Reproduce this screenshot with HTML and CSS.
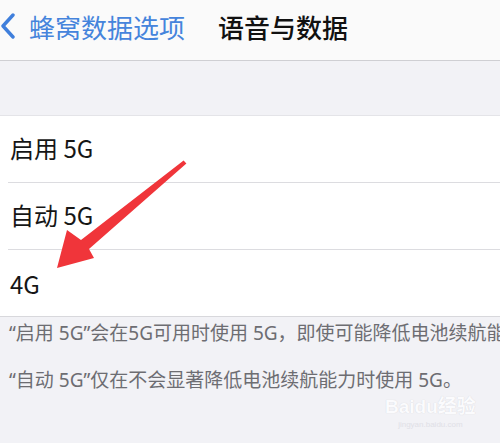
FILE: index.html
```html
<!DOCTYPE html>
<html lang="zh">
<head>
<meta charset="utf-8">
<link rel="stylesheet" href="styles.css">
</head>
<body>
<div class="screen">
  <header class="nav">
    <div class="back">
      <svg class="chev" width="16" height="26" viewBox="0 0 16 26"><path d="M13 2 L3 13 L13 24" fill="none" stroke="#3f7fdc" stroke-width="3.4" stroke-linecap="round" stroke-linejoin="round"/></svg>
      <span class="back-label">蜂窝数据选项</span>
    </div>
    <div class="title">语音与数据</div>
  </header>
  <div class="gap"></div>
  <ul class="list">
    <li class="row">启用 5G</li>
    <li class="row">自动 5G</li>
    <li class="row">4G</li>
  </ul>
  <div class="footer">
    <p class="note">“启用 5G”会在5G可用时使用 5G，即使可能降低电池续航能力。</p>
    <p class="note">“自动 5G”仅在不会显著降低电池续航能力时使用 5G。</p>
  </div>
  <svg class="arrow" width="500" height="443" viewBox="0 0 500 443">
    <polygon points="183.6,160.6 186.4,163.4 89,249 94,258 57,268 67,230 81,240" fill="#f0353a"/>
  </svg>
  <div class="watermark"><span class="wm-main">Baidu经验</span><span class="wm-sub">jingyan.baidu.com</span></div>
</div>
</body>
</html>
```

FILE: styles.css
```css
* { box-sizing: border-box; margin: 0; padding: 0; }
html, body { width: 500px; height: 443px; overflow: hidden; }
body {
  font-family: "Noto Sans CJK SC", "Noto Sans", sans-serif;
  background: #f2f2f6;
  position: relative;
}
.screen { position: relative; width: 500px; height: 443px; overflow: hidden; }
.nav {
  height: 61px;
  background: #fafafa;
  border-bottom: 1px solid #cfcfd3;
  display: flex;
  align-items: center;
  padding-bottom: 8px;
}
.back { display: flex; align-items: center; width: 218px; }
.chev { margin-left: 0; margin-right: 13px; }
.back-label { font-size: 26px; color: #4584dc; }
.title { font-size: 26px; color: #111; font-weight: 500; }
.gap { height: 54px; }
.list {
  list-style: none;
  background: #fff;
  border-top: 1px solid #e4e4e8;
  border-bottom: 1px solid #d8d8dc;
  padding-left: 8px;
}
.row {
  height: 67px;
  display: flex;
  align-items: center;
  padding-left: 2px;
  padding-bottom: 3px;
  font-size: 24px;
  color: #161616;
  border-bottom: 1px solid #dcdce0;
  white-space: nowrap;
}
.row:last-child { border-bottom: none; height: 66px; padding-bottom: 0; }
.footer { padding: 0 0 0 9px; width: 500px; overflow: hidden; }
.note {
  font-family: "Noto Sans", "Noto Sans CJK SC", sans-serif;
  font-size: 19px;
  color: #6d6d72;
  white-space: nowrap;
  line-height: 33px;
  margin-bottom: 14px;
}
.arrow { position: absolute; left: 0; top: 0; pointer-events: none; }
.watermark {
  position: absolute;
  left: 385px;
  top: 396px;
  display: flex;
  flex-direction: column;
  align-items: center;
  gap: 2px;
  color: #fbfbfd;
  font-family: "Liberation Sans", "Noto Sans CJK SC", sans-serif;
}
.wm-main { font-size: 19px; font-weight: bold; line-height: 22px; text-shadow: 0 0 1px #d0d0d6; }
.wm-sub { font-size: 8px; color: #e0e0e6; line-height: 10px; }
```
